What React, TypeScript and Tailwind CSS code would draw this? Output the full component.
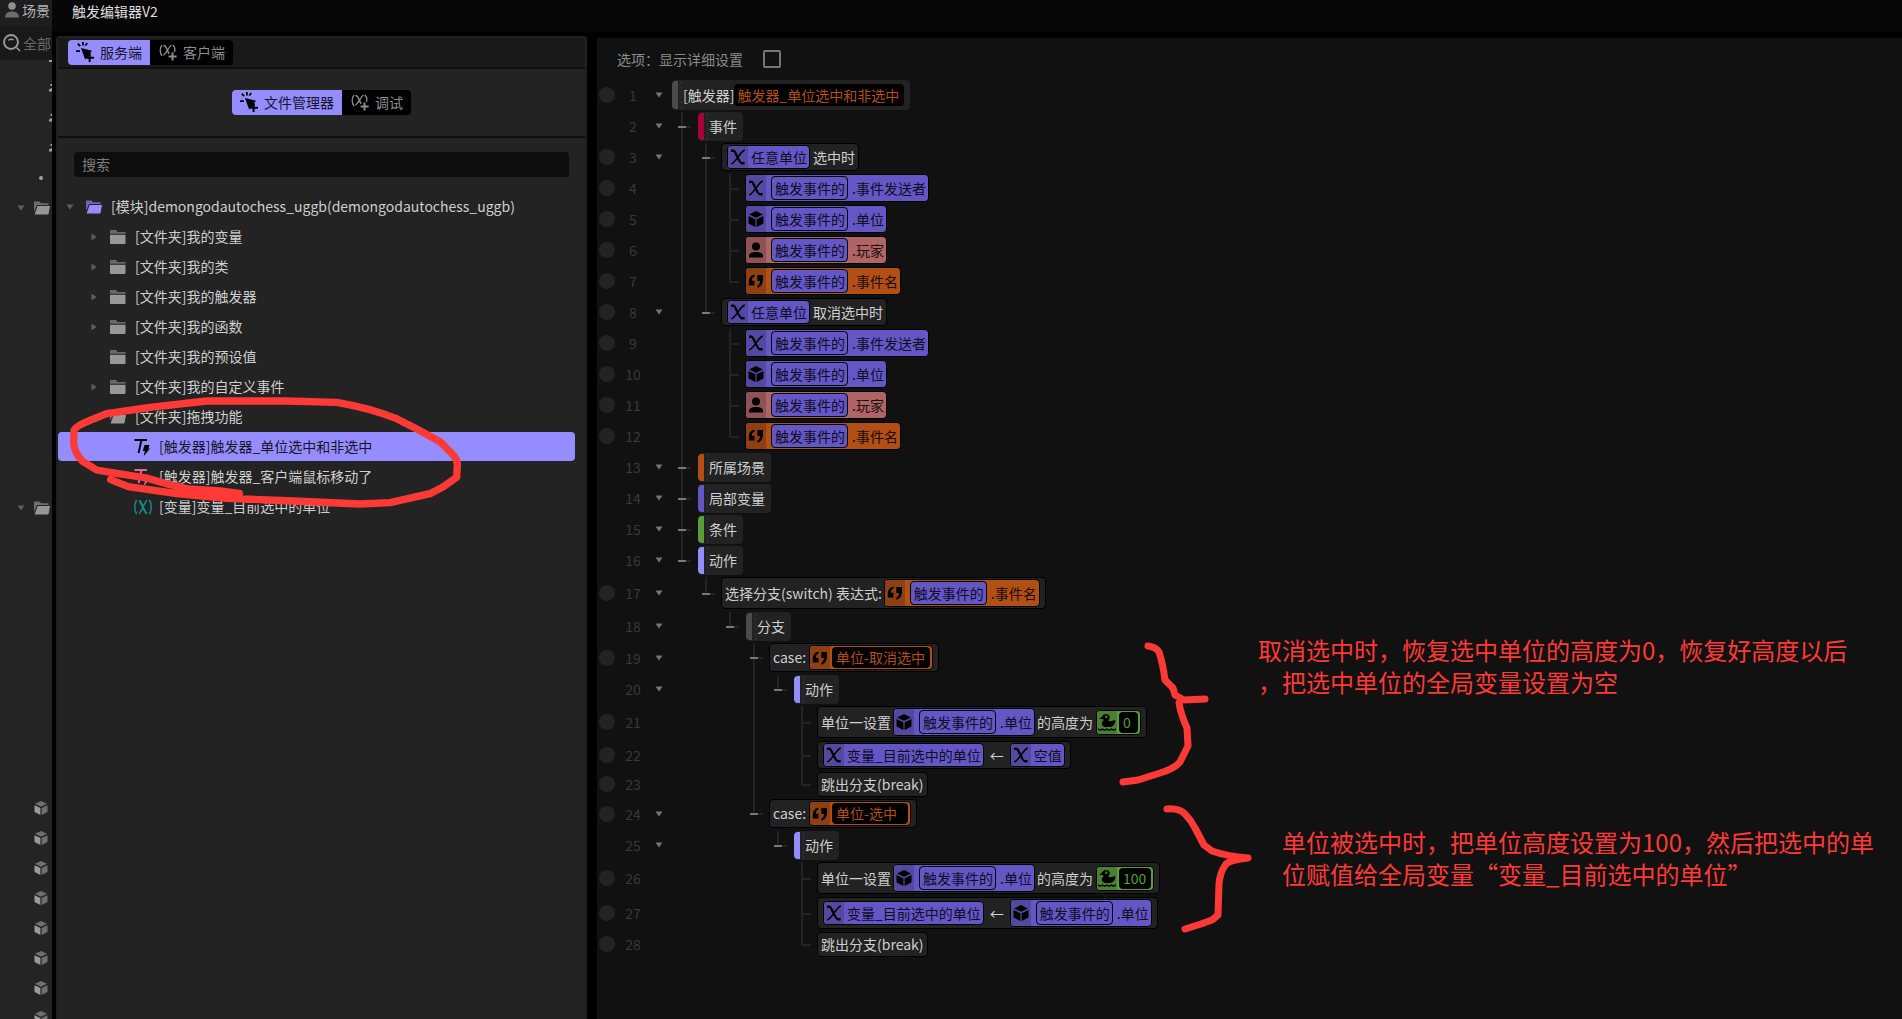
import type { ReactNode } from 'react';

/* ---------- icons ---------- */

type IconProps = { className?: string };

function CursorPlusIcon({ className = '' }: IconProps) {
  return (
    <svg viewBox="0 0 18 20" className={`h-5 w-[18px] shrink-0 ${className}`} fill="currentColor">
      <path d="M0 8.2h4v1.8H0zM1.2 2.4 2.4 1.1 4.8 3.4 3.6 4.7zM6 0h1.8v3.6H6zM8.6 3.2 10.6.6l1.3 1-2 2.5z" />
      <path d="M5 6l11 2.8-2 2.4 1 2.3-2.4.4-.3 1.6-2.6.2-.4 2.3z" />
      <path d="M12.6 11.3h2v3.4H18v2h-3.4V20h-2v-3.3H9.4v-2h3.2z" />
    </svg>
  );
}

function VarPlusIcon({ className = '' }: IconProps) {
  return (
    <svg viewBox="0 0 18 20" className={`h-5 w-[18px] shrink-0 ${className}`} fill="none" stroke="currentColor">
      <path strokeWidth="1.3" d="M3 3C.6 6 .6 11 3 14M14 3c1.8 2 2.2 4.800 1.500 7" />
      <path strokeWidth="1.6" d="M4.400 3.800h1c2 0 3 6 4.800 8" />
      <path strokeWidth="1.3" d="M12.800 3.400C10 3.400 7 13 4.200 13" />
      <path strokeWidth="2" d="M13.500 10.500v8M9.600 14.500h8" />
    </svg>
  );
}

function FolderIcon({ className = '' }: IconProps) {
  return (
    <svg viewBox="0 0 16 14" className={`h-3.5 w-4 shrink-0 ${className}`} fill="currentColor">
      <path opacity=".6" d="M0 0h6l1.500 2H15.500v1.800H0z" />
      <path d="M0 4.800h15.500V13a1 1 0 0 1-1 1H1a1 1 0 0 1-1-1z" />
    </svg>
  );
}

function FolderOpenIcon({ className = '' }: IconProps) {
  return (
    <svg viewBox="0 0 16 14" className={`h-3.5 w-4 shrink-0 ${className}`} fill="currentColor">
      <path opacity=".65" d="M0 .5h5.500L7 2.200h7.500V4H3L0 11z" />
      <path d="M3.600 5H16l-1.400 7.800c-.1.400-.5.700-.9.700H.6z" />
    </svg>
  );
}

function TriggerIcon({ className = '' }: IconProps) {
  return (
    <svg viewBox="0 0 16 18" className={`h-[18px] w-4 shrink-0 ${className}`}>
      <path fill="none" stroke="currentColor" strokeWidth="1.900" d="M.5 2H13M7.400 2 4.600 15" />
      <path fill="currentColor" d="M10.500 7h5l-1.200 3.500H16L9.800 18l1-5H8.800z" />
    </svg>
  );
}

function VariableIcon({ className = '' }: IconProps) {
  return (
    <svg viewBox="0 0 18 16" className={`h-4 w-[18px] shrink-0 ${className}`} fill="none" stroke="currentColor">
      <path strokeWidth="1.500" d="M2.600 1C.2 5 .2 11 2.600 15M15.400 1c2.400 4 2.400 10 0 14" />
      <path strokeWidth="2.200" d="M5.200 1.500C7.500 3 10 13 12.800 14.500" />
      <path strokeWidth="1.500" d="M13.200 1.200C10.500 2.500 7.500 13.500 4.800 14.800" />
    </svg>
  );
}

function XIcon() {
  return (
    <svg viewBox="0 0 16 16" className="size-4" fill="none" stroke="currentColor">
      <path strokeWidth="2.400" d="M1 1.700h2.600c2.200 0 5.200 12.600 8.400 12.600h2.600" />
      <path strokeWidth="1.700" d="M14.800 1.200c-3.800 0-9.600 13.600-13.600 13.600" />
    </svg>
  );
}

function CubeIcon() {
  return (
    <svg viewBox="0 0 16 16" className="size-4" fill="currentColor">
      <path d="M8 0l7 3.400-7 3.400-7-3.400zM.5 4.900l6.900 3.300V16L.5 12.600zM15.500 4.900 8.600 8.200V16l6.900-3.400z" />
    </svg>
  );
}

function StripCubeIcon() {
  return (
    <svg viewBox="0 0 14 14" className="size-3.5">
      <path fill="#6f6f6f" d="M7 0l6 2.800-6 2.900-6-2.900zM13.500 4.200V11L7.600 14V7z" />
      <path fill="#9a9a9a" d="M.5 4.200 6.400 7v7L.5 11z" />
    </svg>
  );
}

function UserIcon() {
  return (
    <svg viewBox="0 0 16 16" className="size-4" fill="currentColor">
      <circle cx="8" cy="4.500" r="4" />
      <path d="M1 15.500v-1.700c0-2.400 2.600-3.800 7-3.800s7 1.400 7 3.800v1.700z" />
    </svg>
  );
}

function QuoteIcon() {
  return (
    <svg viewBox="0 0 16 16" className="size-4" fill="currentColor">
      <path d="M6.500 1.500C2.500 2.500.8 5 .8 9v3.500h5.700V7.800H3.800C3.800 5.600 4.700 4.300 6.500 3.500z" />
      <path d="M9.300 2H15v4.200c0 4.300-1.700 7.300-5.600 8.600v-2.200c1.700-.9 2.600-2.300 2.600-4.500H9.300z" />
    </svg>
  );
}

function DuckIcon() {
  return (
    <svg viewBox="0 0 18 17" className="h-[17px] w-[18px]">
      <path
        fill="currentColor"
        d="M1 4.600C2.500 3.500 3.600 3.400 4.200 2.200 5 .5 7 0 8.700.3c2.300.3 3.400 2 3 3.800-.3 1.200-1.300 2-1.300 2.600 1.500.8 3 .6 4.200.1L17.400 6c0 3.600-1.600 6.300-4.600 7H7.200c-2.800-.5-4.200-2.800-3-5C5 6.600 6 6.500 5.600 5.700 4.400 5 2.600 5.400 1 4.600z"
      />
      <circle cx="8.300" cy="2.800" r="1.200" fill="#4a8030" />
      <path fill="none" stroke="currentColor" strokeWidth="1.300" d="M0 14.800c1.500 1.600 3 1.600 4.500.2 1.500 1.400 3 1.400 4.500 0 1.500 1.400 3 1.400 4.500 0 1.500 1.400 3 1.400 4.500-.2" />
    </svg>
  );
}

function Caret({ className = '' }: IconProps) {
  return (
    <svg viewBox="0 0 8 6" className={`h-1.5 w-2 ${className}`} fill="currentColor">
      <path d="M.5.5h7L4 5.500z" />
    </svg>
  );
}

/* ---------- background scene strip ---------- */

type StripKind = 'slice' | 'dot' | 'folder' | 'cube' | 'none';

const stripRows: StripKind[] = [
  'slice', 'slice', 'slice', 'dot', 'folder',
  'none', 'none', 'none', 'none', 'none', 'none', 'none', 'none', 'none',
  'folder',
  'none', 'none', 'none', 'none', 'none', 'none', 'none', 'none', 'none',
  'cube', 'cube', 'cube', 'cube', 'cube', 'cube', 'cube', 'cube',
];

function StripRow({ kind }: { kind: StripKind }) {
  return (
    <li className="flex h-[30px] shrink-0 items-center justify-end">
      {kind === 'slice' && (
        <svg viewBox="0 0 3 8" className="h-2 w-[3px]" fill="#a0a0a0">
          <path d="M1.500 0H3v2H1.500zM0 5.500 3 4v3.500H0z" />
        </svg>
      )}
      {kind === 'dot' && <span className="mr-[9px] size-1 rounded-full bg-[#a5a5a5]" />}
      {kind === 'folder' && (
        <>
          <Caret className="mr-[9px] text-[#5f5f5f]" />
          <FolderOpenIcon className="mr-0.5 text-[#969696]" />
        </>
      )}
      {kind === 'cube' && (
        <span className="mr-1">
          <StripCubeIcon />
        </span>
      )}
    </li>
  );
}

function SceneStrip() {
  return (
    <aside className="flex w-[52px] shrink-0 flex-col overflow-hidden bg-[#242424]">
      <div className="flex h-[26px] shrink-0 items-center gap-0.5 bg-[#1e1e1e] pb-1.5 pl-1 whitespace-nowrap text-[#b4b4b4]">
        <svg viewBox="0 0 16 16" className="size-4 shrink-0">
          <circle cx="8" cy="4" r="3.800" fill="#8f8f8f" />
          <path d="M1 15.500c0-4 2.600-6 7-6s7 2 7 6z" fill="#6c6c6c" />
        </svg>
        <span className="shrink-0">场景</span>
      </div>
      <div className="flex h-[34px] shrink-0 items-center gap-0.5 bg-[#191919] pl-[3px] whitespace-nowrap text-[#686868]">
        <svg viewBox="0 0 18 18" className="size-[18px] shrink-0" fill="none" stroke="#9a9a9a">
          <circle cx="8" cy="8" r="7" strokeWidth="1.900" />
          <path d="M5.500 6.500C6.300 5 9 4.600 10.500 6M13.500 13.500l3.500 3.500" strokeWidth="1.500" />
        </svg>
        <span className="shrink-0">全部</span>
      </div>
      <div className="flex h-[13px] shrink-0 justify-end">
        <span className="h-0.5 w-[3px] bg-[#a0a0a0]" />
      </div>
      <ul className="flex min-h-0 flex-1 flex-col overflow-hidden">
        {stripRows.map((kind, i) => (
          <StripRow key={i} kind={kind} />
        ))}
      </ul>
    </aside>
  );
}

/* ---------- file manager ---------- */

function Segmented({ active, other }: { active: string; other: string }) {
  return (
    <div className="flex h-[25px] gap-px overflow-hidden rounded bg-black" role="tablist">
      <button role="tab" aria-selected="true" className="flex items-center gap-1.5 bg-[#958cff] px-2 pb-0.5 text-[#17152b]">
        <CursorPlusIcon className="text-black" />
        {active}
      </button>
      <button role="tab" aria-selected="false" className="flex items-center gap-1.5 px-2 pb-0.5 text-[#8c8c8c]">
        <VarPlusIcon />
        {other}
      </button>
    </div>
  );
}

type TreeItem = {
  level: 0 | 1 | 2;
  label: string;
  icon: 'module' | 'folder' | 'open' | 'trigger' | 'client' | 'variable';
  arrow?: 'down' | 'right';
  selected?: boolean;
};

const treeItems: TreeItem[] = [
  { level: 0, label: '[模块]demongodautochess_uggb(demongodautochess_uggb)', icon: 'module', arrow: 'down' },
  { level: 1, label: '[文件夹]我的变量', icon: 'folder', arrow: 'right' },
  { level: 1, label: '[文件夹]我的类', icon: 'folder', arrow: 'right' },
  { level: 1, label: '[文件夹]我的触发器', icon: 'folder', arrow: 'right' },
  { level: 1, label: '[文件夹]我的函数', icon: 'folder', arrow: 'right' },
  { level: 1, label: '[文件夹]我的预设值', icon: 'folder' },
  { level: 1, label: '[文件夹]我的自定义事件', icon: 'folder', arrow: 'right' },
  { level: 1, label: '[文件夹]拖拽功能', icon: 'open' },
  { level: 2, label: '[触发器]触发器_单位选中和非选中', icon: 'trigger', selected: true },
  { level: 2, label: '[触发器]触发器_客户端鼠标移动了', icon: 'client' },
  { level: 2, label: '[变量]变量_目前选中的单位', icon: 'variable' },
];

const levelPadding = ['pl-0', 'pl-6', 'pl-12'];

const treeIcons: Record<TreeItem['icon'], ReactNode> = {
  module: <FolderOpenIcon className="text-[#958cff]" />,
  folder: <FolderIcon className="text-[#989898]" />,
  open: <FolderOpenIcon className="text-[#989898]" />,
  trigger: <TriggerIcon className="text-black" />,
  client: <TriggerIcon className="text-[#f0609a]" />,
  variable: <VariableIcon className="text-[#128a8e]" />,
};

function TreeRow({ item }: { item: TreeItem }) {
  return (
    <li
      role="treeitem"
      aria-selected={!!item.selected}
      className={`mb-px flex h-[29px] items-center rounded-sm whitespace-nowrap ${levelPadding[item.level]} ${
        item.selected ? 'bg-[#958cff] text-[#17152b]' : 'text-[#cfcfcf]'
      }`}
    >
      <span className="flex w-6 justify-center text-[#5f5f5f]">
        {item.arrow && <Caret className={item.arrow === 'right' ? '-rotate-90' : ''} />}
      </span>
      <span className="mr-[7px] ml-1 flex w-[18px]">{treeIcons[item.icon]}</span>
      <span className="pb-0.5">{item.label}</span>
    </li>
  );
}

function FilePanel() {
  return (
    <section className="flex w-[531px] shrink-0 flex-col rounded-t border-x-2 border-t-2 border-[#202020] bg-[#232323]">
      <div className="flex border-b-2 border-[#0f0f0f] bg-[#191919] px-2.5 py-0.5">
        <Segmented active="服务端" other="客户端" />
      </div>
      <div className="flex justify-center border-b-2 border-[#0f0f0f] py-[21px]">
        <Segmented active="文件管理器" other="调试" />
      </div>
      <div className="pt-3.5 pr-4 pl-4">
        <input
          type="text"
          aria-label="搜索"
          placeholder="搜索"
          className="block h-[25px] w-full rounded bg-[#0d0d0d] px-2 pb-0.5 text-[#cfcfcf] outline-none placeholder:text-[#7d7d7d]"
        />
      </div>
      <ul role="tree" className="mt-[15px] mr-2.5">
        {treeItems.map((item) => (
          <TreeRow key={item.label} item={item} />
        ))}
      </ul>
    </section>
  );
}

/* ---------- code blocks ---------- */

type Tone = 'purple' | 'pink' | 'orange' | 'green';

const toneBody: Record<Tone, string> = {
  purple: 'bg-[#6556c6] text-[#0f0d1e]',
  pink: 'bg-[#b06466] text-[#1a0f0f]',
  orange: 'bg-[#b14f15] text-[#1b0c03]',
  green: 'bg-[#5a9e38] text-black',
};

const toneIcon: Record<Tone, string> = {
  purple: 'bg-[#5548a0]',
  pink: 'bg-[#8f5153]',
  orange: 'bg-[#8e4013]',
  green: 'bg-[#4a8030]',
};

function Chip({ tone = 'purple', icon, children, lead = false }: { tone?: Tone; icon: ReactNode; children: ReactNode; lead?: boolean }) {
  return (
    <span className={`flex items-stretch overflow-hidden rounded border border-black ${toneBody[tone]} ${lead ? '' : 'mx-0.5'}`}>
      <span className={`flex w-5 shrink-0 items-center justify-center text-black ${toneIcon[tone]}`}>{icon}</span>
      <span className="flex items-center pr-0.5 pl-[3px] leading-[22px]">{children}</span>
    </span>
  );
}

function EventProp({ tone = 'purple', icon, prop, lead = false }: { tone?: Tone; icon: ReactNode; prop: string; lead?: boolean }) {
  return (
    <Chip tone={tone} icon={icon} lead={lead}>
      <span className="mx-0.5 my-px rounded border border-black bg-[#6556c6] pr-0.5 pl-[3px] text-[#0f0d1e]">触发事件的</span>
      <span className="pl-0.5">.{prop}</span>
    </Chip>
  );
}

function ValueChip({ tone, icon, value, label, width }: { tone: 'orange' | 'green'; icon: ReactNode; value: string; label: string; width: string }) {
  const green = tone === 'green';
  return (
    <span className={`mr-0.5 ml-[3px] flex h-[25px] overflow-hidden rounded border border-black pr-0.5 ${toneBody[tone]}`}>
      <span className={`flex w-5 shrink-0 items-center justify-center text-black ${toneIcon[tone]}`}>{icon}</span>
      <input
        type="text"
        aria-label={label}
        defaultValue={value}
        className={`my-px ml-0.5 h-[21px] rounded bg-black pl-1 outline-none ${width} ${green ? 'text-[#5a9e38]' : 'text-[#b14f15]'}`}
      />
    </span>
  );
}

function Statement({ children }: { children: ReactNode }) {
  return (
    <div className="flex items-center rounded border border-black bg-[#222222] px-[3px] py-px leading-[21px] whitespace-pre text-[#cfcfcf]">
      {children}
    </div>
  );
}

function Section({ bar, children }: { bar: string; children: ReactNode }) {
  return (
    <div className="ml-px flex h-[29px] items-stretch overflow-hidden rounded bg-[#222222] py-px pr-1.5 text-[#cfcfcf]">
      <span className={`w-1.5 rounded-l ${bar}`} />
      <span className="mr-px w-1 border-r border-dashed border-[#333333]" />
      <span className="flex items-center pb-0.5">{children}</span>
    </div>
  );
}

/* ---------- code rows ---------- */

/* Guides, one per indent level: a blank, a passing line, a tee, or a closing elbow. */
type Guide = ' ' | '|' | '+' | 'L';

function GuideCell({ kind, fold }: { kind: Guide; fold: boolean }) {
  if (kind === ' ') return <span className="w-6" />;
  const joins = kind !== '|';
  return (
    <span className="relative w-6 pl-2">
      <span className={`block w-0.5 bg-[#232323] ${kind === 'L' ? 'h-1/2' : 'h-full'}`} />
      {joins && <span className="absolute top-1/2 left-2 -mt-0.5 h-0.5 w-2.5 bg-[#232323]" />}
      {joins && fold && <span className="absolute top-1/2 left-[5px] -mt-0.5 h-0.5 w-2 bg-[#7a7a7a]" />}
    </span>
  );
}

type CodeRow = { height: string; dot: boolean; fold: boolean; guides: string; body: ReactNode };

const H31 = 'h-[31px]';
const H35 = 'h-[35px]';
const H27 = 'h-[27px]';

const eventProps = (): CodeRow[] => [
  { height: H31, dot: true, fold: false, guides: '||+', body: <EventProp lead icon={<XIcon />} prop="事件发送者" /> },
  { height: H31, dot: true, fold: false, guides: '||+', body: <EventProp lead icon={<CubeIcon />} prop="单位" /> },
  { height: H31, dot: true, fold: false, guides: '||+', body: <EventProp lead tone="pink" icon={<UserIcon />} prop="玩家" /> },
  { height: H31, dot: true, fold: false, guides: '||L', body: <EventProp lead tone="orange" icon={<QuoteIcon />} prop="事件名" /> },
];

const unlinked = (rows: CodeRow[]): CodeRow[] => rows.map((r) => ({ ...r, guides: '| ' + r.guides[2] }));

const rows: CodeRow[] = [
  {
    height: 'h-8',
    dot: true,
    fold: true,
    guides: '',
    body: (
      <div className="-ml-px flex h-[30px] items-center rounded bg-[#222222] pr-1.5 text-[#cfcfcf]">
        <span className="my-px w-1.5 self-stretch rounded-l bg-[#4b4b4b]" />
        <span className="my-px mr-px w-1 self-stretch border-r border-dashed border-[#333333]" />
        [触发器]
        <input
          type="text"
          aria-label="触发器名称"
          defaultValue="触发器_单位选中和非选中"
          className="h-[22px] w-[170px] rounded bg-black pl-[3px] text-[#b14f15] outline-none"
        />
      </div>
    ),
  },
  { height: H31, dot: false, fold: true, guides: '+', body: <Section bar="bg-[#a8003c]">事件</Section> },
  {
    height: H31,
    dot: true,
    fold: true,
    guides: '|+',
    body: (
      <Statement>
        <Chip icon={<XIcon />}>任意单位</Chip>
        <span className="pl-px">选中时</span>
      </Statement>
    ),
  },
  ...eventProps(),
  {
    height: H31,
    dot: true,
    fold: true,
    guides: '|L',
    body: (
      <Statement>
        <Chip icon={<XIcon />}>任意单位</Chip>
        <span className="pl-px">取消选中时</span>
      </Statement>
    ),
  },
  ...unlinked(eventProps()),
  { height: H31, dot: false, fold: true, guides: '+', body: <Section bar="bg-[#b14f15]">所属场景</Section> },
  { height: H31, dot: false, fold: true, guides: '+', body: <Section bar="bg-[#6556c6]">局部变量</Section> },
  { height: H31, dot: false, fold: true, guides: '+', body: <Section bar="bg-[#5a9e38]">条件</Section> },
  { height: H31, dot: false, fold: true, guides: 'L', body: <Section bar="bg-[#958cff]">动作</Section> },
  {
    height: H35,
    dot: true,
    fold: true,
    guides: ' L',
    body: (
      <Statement>
        选择分支(switch) 表达式:
        <EventProp tone="orange" icon={<QuoteIcon />} prop="事件名" />
      </Statement>
    ),
  },
  { height: H31, dot: false, fold: true, guides: '  L', body: <Section bar="bg-[#4b4b4b]">分支</Section> },
  {
    height: 'h-8',
    dot: true,
    fold: true,
    guides: '   +',
    body: (
      <Statement>
        case:
        <ValueChip tone="orange" icon={<QuoteIcon />} label="case 值" value="单位-取消选中" width="w-[98px]" />
      </Statement>
    ),
  },
  { height: H31, dot: false, fold: true, guides: '   |L', body: <Section bar="bg-[#958cff]">动作</Section> },
  {
    height: H35,
    dot: true,
    fold: false,
    guides: '   | +',
    body: (
      <Statement>
        单位一设置
        <EventProp icon={<CubeIcon />} prop="单位" />
        <span>的高度为</span>
        <ValueChip tone="green" icon={<DuckIcon />} label="高度" value="0" width="w-[19px]" />
      </Statement>
    ),
  },
  {
    height: H31,
    dot: true,
    fold: false,
    guides: '   | +',
    body: (
      <Statement>
        <Chip icon={<XIcon />}>变量_目前选中的单位</Chip>
        <span className="px-1">←</span>
        <Chip icon={<XIcon />}>空值</Chip>
      </Statement>
    ),
  },
  { height: H27, dot: true, fold: false, guides: '   | L', body: <Statement>跳出分支(break)</Statement> },
  {
    height: 'h-8',
    dot: true,
    fold: true,
    guides: '   L',
    body: (
      <Statement>
        case:
        <ValueChip tone="orange" icon={<QuoteIcon />} label="case 值" value="单位-选中" width="w-[76px]" />
      </Statement>
    ),
  },
  { height: H31, dot: false, fold: true, guides: '    L', body: <Section bar="bg-[#958cff]">动作</Section> },
  {
    height: H35,
    dot: true,
    fold: false,
    guides: '     +',
    body: (
      <Statement>
        单位一设置
        <EventProp icon={<CubeIcon />} prop="单位" />
        <span>的高度为</span>
        <ValueChip tone="green" icon={<DuckIcon />} label="高度" value="100" width="w-8" />
      </Statement>
    ),
  },
  {
    height: H35,
    dot: true,
    fold: false,
    guides: '     +',
    body: (
      <Statement>
        <Chip icon={<XIcon />}>变量_目前选中的单位</Chip>
        <span className="px-1">←</span>
        <EventProp icon={<CubeIcon />} prop="单位" />
      </Statement>
    ),
  },
  { height: H27, dot: true, fold: false, guides: '     L', body: <Statement>跳出分支(break)</Statement> },
];

function Row({ row, number }: { row: CodeRow; number: number }) {
  return (
    <li className={`flex pl-0.5 whitespace-nowrap ${row.height}`}>
      <span className="flex w-[74px] shrink-0 items-center pb-[3px]">
        <span className={`size-4 rounded-full ${row.dot ? 'bg-[#232323]' : ''}`} />
        <span className="w-9 text-center text-[#393939]">{number}</span>
        {row.fold && (
          <button aria-label={`折叠第 ${number} 行`} className="flex w-4 justify-center text-[#757575]">
            <Caret />
          </button>
        )}
      </span>
      {[...row.guides].map((g, i) => (
        <GuideCell key={i} kind={g as Guide} fold={row.fold} />
      ))}
      <div className="flex items-start">{row.body}</div>
    </li>
  );
}

function CodePanel() {
  return (
    <section className="relative mt-0.5 flex min-w-0 flex-1 flex-col bg-[#111111]">
      <label className="flex h-[42px] items-center gap-5 pl-5 text-[#8a8a8a]">
        选项：显示详细设置
        <input type="checkbox" className="size-[18px] appearance-none rounded-xs border-2 border-[#757575]" />
      </label>
      <ol>
        {rows.map((row, i) => (
          <Row key={i} row={row} number={i + 1} />
        ))}
      </ol>
      <BraceNotes />
    </section>
  );
}

/* ---------- hand-drawn notes ---------- */

function BraceNotes() {
  return (
    <div className="pointer-events-none absolute top-[582px] left-[502px] h-[330px]">
      <svg viewBox="0 0 160 330" className="h-[330px] w-40" fill="none" stroke="#ff3a36" strokeWidth="7" strokeLinecap="round" strokeLinejoin="round">
        <path d="M49 26q8 1 11 6 4 12 6 28l8 8 2 7 9 5 21-1M82 79l-2 4q2 12 8 25l1 18-8 16q-6 7-20 11l-22 7-15 2" />
        <path d="M68 189q12-1 18 5 6 6 10 14l9 17 8 6q14 5 36 7-18 2-22 6-6 8-7 20l-1 31-6 5-11 4-16 5" />
      </svg>
      <p className="absolute top-[14px] left-[159px] text-2xl whitespace-nowrap text-[#ff3a36]">
        取消选中时，恢复选中单位的高度为0，恢复好高度以后
        <br />
        ，把选中单位的全局变量设置为空
      </p>
      <p className="absolute top-[206px] left-[183px] text-2xl whitespace-nowrap text-[#ff3a36]">
        单位被选中时，把单位高度设置为100，然后把选中的单
        <br />
        位赋值给全局变量“变量_目前选中的单位”
      </p>
    </div>
  );
}

function CircleNote() {
  return (
    <svg
      viewBox="0 0 1260 390"
      className="pointer-events-none absolute top-[390px] left-[60px] h-[130px] w-[420px]"
      fill="none"
      stroke="#ff3a36"
      strokeWidth="22"
      strokeLinecap="round"
      strokeLinejoin="round"
    >
      <path d="M538 310 480 303 385 297 330 284 260 264 170 250 110 240 68 214Q44 190 41 160L42 122Q46 108 100 87L140 71 270 52 440 33H680L830 37Q930 54 1010 86L1072 118 1140 155 1180 195Q1192 208 1192 225L1190 262 1150 290 1110 311 990 338 900 342 700 333 500 325 350 311 205 290 152 269" />
      <path d="M370 300 530 311" />
    </svg>
  );
}

export default function App() {
  return (
    <div className="relative flex h-screen overflow-hidden bg-black font-['Noto_Sans_CJK_SC',sans-serif] text-sm">
      <SceneStrip />
      <div className="flex min-w-0 flex-1 flex-col">
        <header className="flex h-8 shrink-0 items-center bg-[#070707] pb-2.5 pl-5 text-[#dedede]">
          <h1>触发编辑器V2</h1>
        </header>
        <main className="mt-1 flex min-h-0 flex-1 gap-2.5 pl-1">
          <FilePanel />
          <CodePanel />
        </main>
      </div>
      <CircleNote />
    </div>
  );
}
